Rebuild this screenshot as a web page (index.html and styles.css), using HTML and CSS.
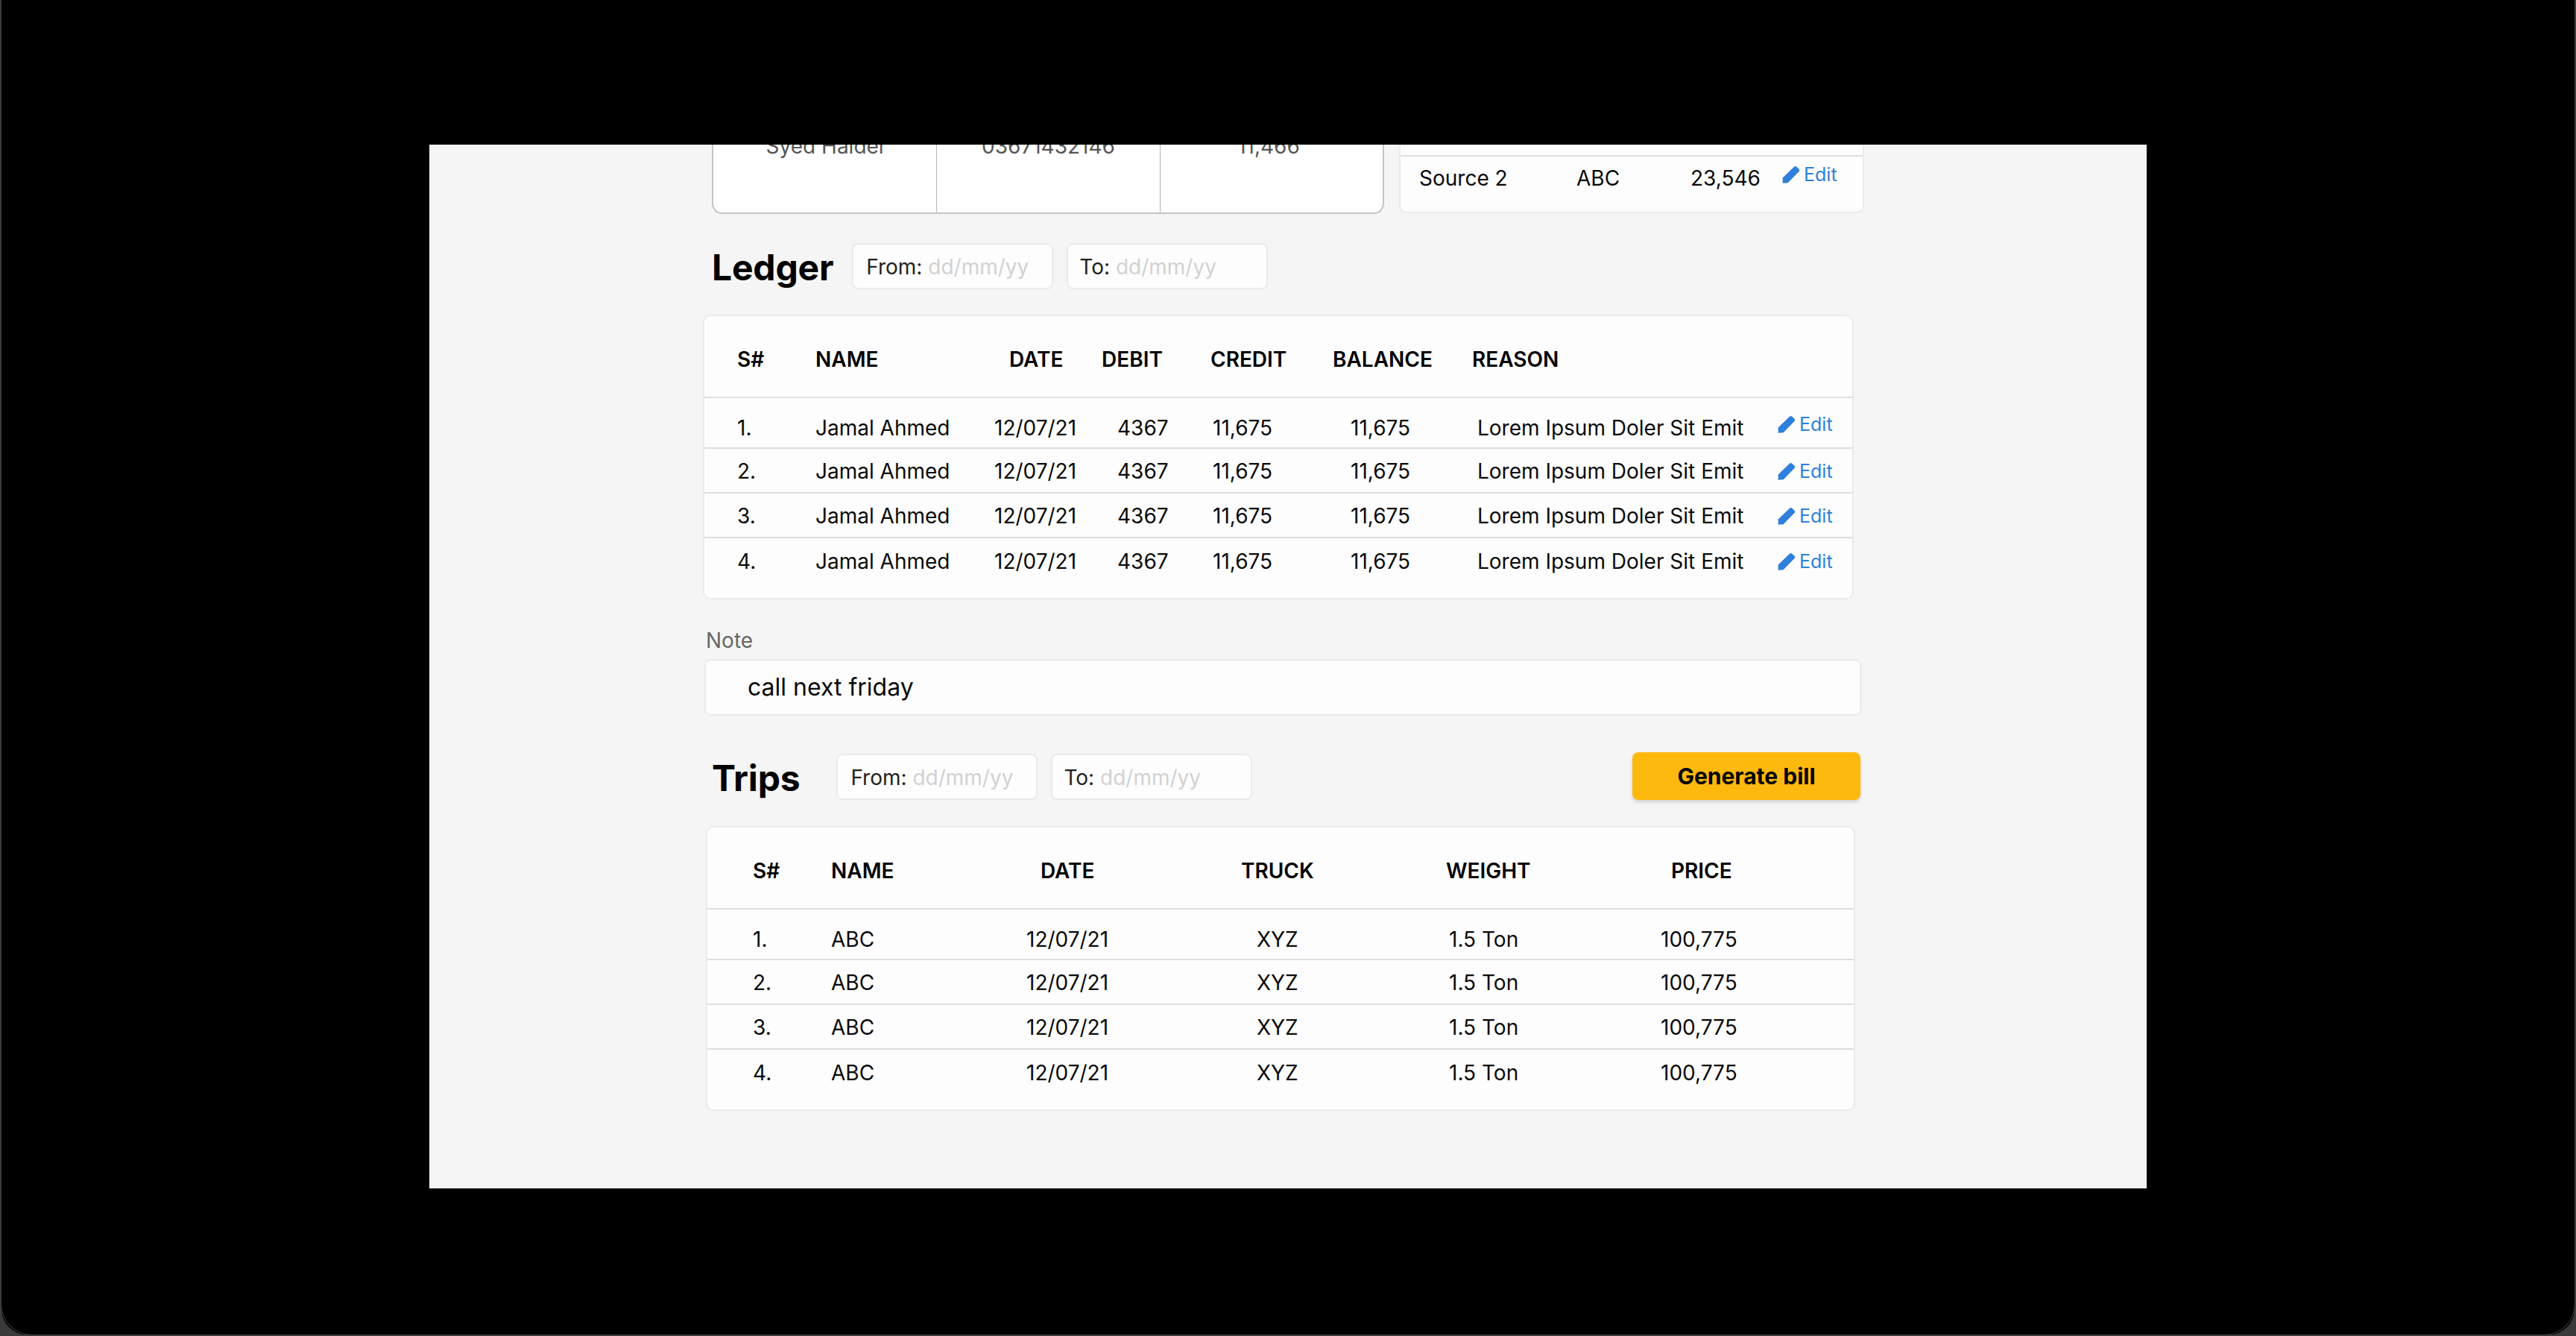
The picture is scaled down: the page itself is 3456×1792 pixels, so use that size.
FILE: index.html
```html
<!DOCTYPE html>
<html lang="en">
<head>
<meta charset="utf-8">
<title>Ledger and trips</title>
<link rel="stylesheet" href="styles.css">
</head>
<body>
<svg class="defs" width="0" height="0" aria-hidden="true"><symbol id="pencil" viewBox="0 0 22 22"><path d="M0.6 15.2 14.6 1.5c.9-.9 2.2-.9 3.1 0l2.9 2.8c.9.9.9 2.2 0 3.1L7 21.3.6 21.7z"/></symbol></svg>
<div class="frame">
  <main class="panel">
    <section class="top-row">
      <div class="contact-card">
        <div class="contact-cell">Syed Haider</div>
        <div class="contact-cell">03671432146</div>
        <div class="contact-cell">11,466</div>
      </div>
      <div class="source-card">
        <div class="source-row">
          <span>Source 2</span><span>ABC</span><span>23,546</span>
          <a class="edit edit-up"><svg class="pencil"><use href="#pencil"/></svg>Edit</a>
        </div>
      </div>
    </section>

    <section class="heading-row ledger-heading">
      <h2 class="title">Ledger</h2>
      <div class="date-box">From: <span class="ph">dd/mm/yy</span></div>
      <div class="date-box">To: <span class="ph">dd/mm/yy</span></div>
    </section>

    <section class="table-card ledger-card">
      <div class="thead ledger-head"><span>S#</span><span>NAME</span><span>DATE</span><span>DEBIT</span><span>CREDIT</span><span>BALANCE</span><span>REASON</span></div>
      <div class="trow ledger-row first"><span>1.</span><span>Jamal Ahmed</span><span>12/07/21</span><span>4367</span><span>11,675</span><span>11,675</span><span>Lorem Ipsum Doler Sit Emit</span><a class="edit edit-up"><svg class="pencil"><use href="#pencil"/></svg>Edit</a></div>
      <div class="trow ledger-row"><span>2.</span><span>Jamal Ahmed</span><span>12/07/21</span><span>4367</span><span>11,675</span><span>11,675</span><span>Lorem Ipsum Doler Sit Emit</span><a class="edit"><svg class="pencil"><use href="#pencil"/></svg>Edit</a></div>
      <div class="trow ledger-row"><span>3.</span><span>Jamal Ahmed</span><span>12/07/21</span><span>4367</span><span>11,675</span><span>11,675</span><span>Lorem Ipsum Doler Sit Emit</span><a class="edit"><svg class="pencil"><use href="#pencil"/></svg>Edit</a></div>
      <div class="trow ledger-row last"><span>4.</span><span>Jamal Ahmed</span><span>12/07/21</span><span>4367</span><span>11,675</span><span>11,675</span><span>Lorem Ipsum Doler Sit Emit</span><a class="edit"><svg class="pencil"><use href="#pencil"/></svg>Edit</a></div>
    </section>

    <section class="note">
      <label class="note-label">Note</label>
      <div class="note-box">call next friday</div>
    </section>

    <section class="heading-row trips-heading">
      <h2 class="title">Trips</h2>
      <div class="date-box">From: <span class="ph">dd/mm/yy</span></div>
      <div class="date-box">To: <span class="ph">dd/mm/yy</span></div>
      <button class="bill-btn">Generate bill</button>
    </section>

    <section class="table-card trips-card">
      <div class="thead trips-head"><span>S#</span><span>NAME</span><span>DATE</span><span>TRUCK</span><span>WEIGHT</span><span>PRICE</span></div>
      <div class="trow trips-row first"><span>1.</span><span>ABC</span><span>12/07/21</span><span>XYZ</span><span>1.5 Ton</span><span>100,775</span></div>
      <div class="trow trips-row"><span>2.</span><span>ABC</span><span>12/07/21</span><span>XYZ</span><span>1.5 Ton</span><span>100,775</span></div>
      <div class="trow trips-row"><span>3.</span><span>ABC</span><span>12/07/21</span><span>XYZ</span><span>1.5 Ton</span><span>100,775</span></div>
      <div class="trow trips-row last"><span>4.</span><span>ABC</span><span>12/07/21</span><span>XYZ</span><span>1.5 Ton</span><span>100,775</span></div>
    </section>
  </main>
</div>
</body>
</html>
```

FILE: styles.css
```css
* { box-sizing: border-box; }
html, body { margin: 0; height: 100%; }
body {
  background: #3a3a3a;
  font-family: Inter, "Liberation Sans", sans-serif;
  font-size: 28px;
  color: #0a0a0a;
  overflow: hidden;
}
.defs { position: absolute; }
.frame {
  position: relative;
  height: 1790px;
  margin: 0 2px;
  background: #000;
  border-radius: 0 0 34px 34px;
  padding-top: 194px;
  display: flex;
  justify-content: center;
  align-items: flex-start;
}
.frame::before {
  content: "";
  position: absolute;
  inset: 0 -1px -1px;
  border: 1px solid #3a3a3a;
  border-top: 0;
  border-radius: 0 0 42px 42px;
}
.panel {
  width: 2304px;
  height: 1400px;
  background: #f5f5f5;
  overflow: hidden;
  padding-left: 369px;
}
.top-row {
  height: 93px;
  display: flex;
  align-items: flex-end;
  overflow: hidden;
  gap: 20px;
  padding-left: 10px;
}
.contact-card {
  flex: none;
  width: 902px;
  height: 140px;
  display: grid;
  grid-template-columns: 300px 300px 1fr;
  background: #fff;
  border: 2px solid #c4c4c4;
  border-radius: 14px;
}
.contact-cell {
  padding-top: 30px;
  line-height: 34px;
  text-align: center;
  color: #555;
  border-right: 1px solid #b4b4b4;
}
.contact-cell:first-child { padding-left: 4px; }
.contact-cell:last-child { border-right: 0; padding-right: 8px; }
.source-card {
  flex: none;
  width: 624px;
  height: 91px;
  margin-bottom: 1px;
  display: flex;
  align-items: flex-end;
  background: #fdfdfd;
  border: 2px solid #ebebeb;
  border-top: 0;
  border-radius: 0 0 10px 10px;
}
.source-row {
  flex: 1;
  height: 76px;
  border-top: 2px solid #dedede;
  padding: 0 0 16px 25px;
  display: grid;
  grid-template-columns: 211px 153px 123px auto;
  align-items: center;
}
.heading-row { display: flex; align-items: center; padding-left: 10px; }
.ledger-heading { margin-top: 39px; height: 62px; gap: 18px; }
.ledger-heading .title { margin-right: 7px; padding-top: 3px; }
.trips-heading { margin-top: 49px; height: 64px; gap: 18px; width: 1551px; }
.trips-heading .title { margin-right: 31px; padding-top: 6px; }
.trips-heading .date-box { margin-top: 2px; }
.title { margin: 0; font-size: 48px; font-weight: 700; line-height: 60px; letter-spacing: -0.2px; color: #000; }
.date-box {
  width: 270px;
  height: 62px;
  padding: 2px 0 0 17px;
  display: flex;
  align-items: center;
  white-space: pre;
  background: #fdfdfd;
  border: 2px solid #ebebeb;
  border-radius: 8px;
  color: #222;
}
.date-box + .date-box { padding-left: 15px; }
.ph { color: #d2d2d2; }
.bill-btn {
  margin-left: auto;
  width: 306px;
  height: 64px;
  border: 0;
  border-radius: 8px;
  background: #fdb90e;
  box-shadow: 0 3px 5px rgba(0, 0, 0, 0.15);
  font: 700 30px Inter, "Liberation Sans", sans-serif;
  color: #000;
}
.table-card {
  background: #fdfdfd;
  border: 2px solid #ebebeb;
  border-radius: 10px;
}
.ledger-card { margin-top: 34px; margin-left: -2px; width: 1544px; }
.trips-card { margin-top: 35px; margin-left: 2px; width: 1542px; }
.thead {
  height: 110px;
  padding-top: 7px;
  display: grid;
  align-items: center;
  font-weight: 600;
  color: #000;
  border-bottom: 2px solid #dedede;
}
.trow {
  height: 60px;
  padding-top: 2px;
  display: grid;
  align-items: center;
  border-bottom: 2px solid #dedede;
}
.trow.first { height: 68px; padding-top: 14px; }
.trow.last { height: 80px; padding-bottom: 21px; border-bottom: 0; }
.ledger-head { padding-left: 44px; grid-template-columns: 105px 260px 124px 146px 164px 187px auto; }
.ledger-row { padding-left: 44px; grid-template-columns: 105px 240px 165px 128px 185px 170px 403px auto; }
.trips-head { padding-left: 61px; grid-template-columns: 105px 281px 269px 275px 302px auto; }
.trips-row { padding-left: 61px; grid-template-columns: 105px 262px 309px 258px 284px auto; }
.edit {
  display: flex;
  align-items: center;
  gap: 5px;
  font-size: 25px;
  color: #2f80db;
}
.edit-up { margin-top: -10px; }
.pencil { width: 24px; height: 24px; fill: #2f80db; }
.note { margin-top: 38px; }
.note-label { display: block; padding-left: 2px; line-height: 34px; color: #666; }
.note-box {
  margin-top: 8px;
  width: 1552px;
  height: 76px;
  padding: 0 0 2px 56px;
  display: flex;
  align-items: center;
  font-size: 32px;
  background: #fdfdfd;
  border: 2px solid #ebebeb;
  border-radius: 8px;
}
```
